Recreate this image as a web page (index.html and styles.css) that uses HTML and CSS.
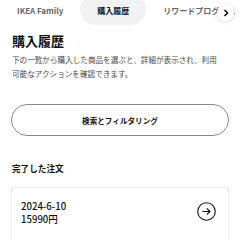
FILE: index.html
```html
<!DOCTYPE html>
<html lang="ja">
<head>
    <meta charset="UTF-8">
    <meta name="viewport" content="width=device-width, initial-scale=1.0">
    <title>購入履歴</title>
    <link rel="stylesheet" href="styles.css">
</head>
<body>
    <div class="tabs-wrap">
        <div class="tabs">
            <div class="tab">IKEA Family</div>
            <div class="tab tab-active">購入履歴</div>
            <div class="tab">リワードプログラム</div>
            <div class="tab">その他</div>
        </div>
        <button class="tabs-next" aria-label="次へ">
            <svg width="8" height="8" viewBox="0 0 8 8"><path d="M2.5 1 L5.5 4 L2.5 7" fill="none" stroke="#111" stroke-width="1.6"/></svg>
        </button>
    </div>

    <div class="content">
        <h1>購入履歴</h1>
        <p class="intro">下の一覧から購入した商品を選ぶと、詳細が表示され、利用可能なアクションを確認できます。</p>

        <button class="filter-btn">検索とフィルタリング</button>

        <h2>完了した注文</h2>

        <div class="order-card">
            <div class="order-info">
                <div>2024-6-10</div>
                <div>15990円</div>
            </div>
            <span class="order-arrow">
                <svg width="19" height="19" viewBox="0 0 19 19"><circle cx="9.5" cy="9.5" r="8.8" fill="none" stroke="#111" stroke-width="1.1"/><path d="M5.5 9.5 H13 M9.8 6.3 L13 9.5 L9.8 12.7" fill="none" stroke="#111" stroke-width="1.2"/></svg>
            </span>
        </div>
    </div>
</body>
</html>
```

FILE: styles.css
```css
body {
    margin: 0;
    font-family: "Noto Sans CJK JP", "Noto Sans", sans-serif;
    background-color: white;
    color: #111;
    overflow: hidden;
}

.tabs-wrap {
    position: relative;
    overflow: hidden;
    height: 25px;
}

.tabs {
    display: flex;
    white-space: nowrap;
    margin-top: -6px;
}

.tab {
    height: 31px;
    line-height: 34px;
    padding: 0 17px;
    font-size: 8px;
    font-weight: bold;
    color: #666;
    border-radius: 16px;
}

.tab-active {
    background-color: #f2f2f2;
    color: #111;
}

.tabs-next {
    position: absolute;
    top: 4px;
    left: 217px;
    width: 17px;
    height: 17px;
    padding: 0;
    border: none;
    border-radius: 50%;
    background-color: white;
    box-shadow: 0 1px 4px rgba(0, 0, 0, 0.15);
    display: flex;
    align-items: center;
    justify-content: center;
}

.content {
    padding: 0 11px 0 12px;
}

h1 {
    margin: 7px 0 0;
    font-size: 13px;
    line-height: 18px;
    font-weight: bold;
}

.intro {
    margin: 3px 0 0;
    max-width: 210px;
    font-size: 7.6px;
    line-height: 14px;
    color: #484848;
}

.filter-btn {
    display: block;
    width: 218px;
    height: 32px;
    margin: 23px 0 0 -1px;
    border: 1px solid #8a8a8a;
    border-radius: 16px;
    background-color: white;
    font-family: inherit;
    font-size: 7.6px;
    font-weight: bold;
    color: #111;
}

h2 {
    margin: 26px 0 0;
    font-size: 8.6px;
    line-height: 12px;
    font-weight: bold;
}

.order-card {
    margin: 13px 0 0 -1px;
    height: 70px;
    border: 1px solid #ececec;
    padding: 11px 12px 0 9px;
    display: flex;
    justify-content: space-between;
    align-items: flex-start;
}

.order-info {
    font-size: 9.6px;
    line-height: 13px;
    font-weight: 500;
    padding-top: 1px;
}

.order-arrow {
    margin-top: 3px;
    display: flex;
}
```
